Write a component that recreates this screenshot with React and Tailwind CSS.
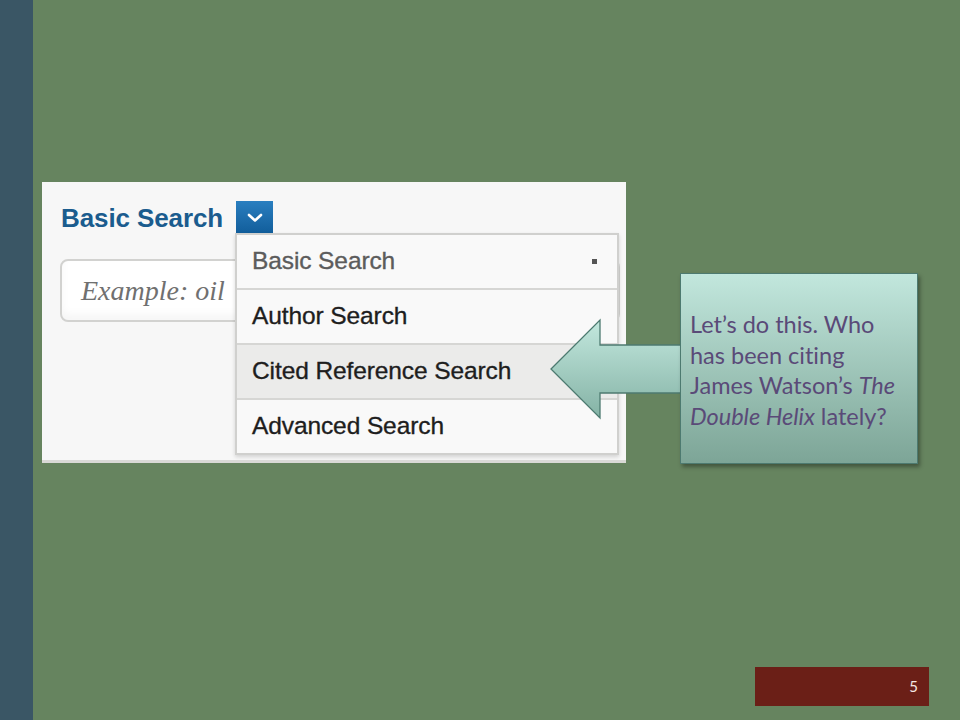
import React from 'react';

const menuItems = [
  { label: 'Basic Search', current: true },
  { label: 'Author Search' },
  { label: 'Cited Reference Search', hover: true },
  { label: 'Advanced Search' },
];

const SearchShot = () => (
  <div className="relative h-[281px] w-[584px] overflow-hidden bg-[#f7f7f7] border-b-[3px] border-[#d9d9d6] font-['Liberation_Sans',Arial,sans-serif]">
    <div className="flex items-center pl-[19px] pt-[16px]">
      <span className="text-[26px] font-bold leading-[40px] tracking-[-0.1px] text-[#1b5c8e]">
        Basic Search
      </span>
      <span className="ml-[13px] flex h-[35px] w-[37px] items-center justify-center bg-gradient-to-b from-[#2a7fc0] to-[#0f5b98]">
        <svg width="16" height="10" viewBox="0 0 16 10">
          <path d="M2 2l6 5.5L14 2" fill="none" stroke="#fff" strokeWidth="2.6" strokeLinecap="round" strokeLinejoin="round" />
        </svg>
      </span>
    </div>
    <div className="ml-[18px] mt-[21px] flex h-[63px] w-[560px] items-center rounded-[8px] border-[2px] border-[#d2d2d0] bg-white pl-[19px] shadow-[inset_0_-6px_8px_rgba(0,0,0,0.04)]">
      <span className="font-['Liberation_Serif',serif] text-[28px] italic text-[#707070]">Example: oil</span>
    </div>

    {/* dropdown menu */}
    <div className="absolute left-[193px] top-[51px] w-[384px] border-[2px] border-[#d0d0ce] bg-[#f9f9f9] shadow-[0_2px_4px_rgba(0,0,0,0.15)]">
      {menuItems.map((item, i) => (
        <div
          key={item.label}
          className={`flex items-center justify-between px-[15px] text-[24.5px] tracking-[-0.1px] [-webkit-text-stroke:0.35px_currentColor] ${
            i > 0 ? 'h-[55px] border-t-[2px] border-[#d6d6d4]' : 'h-[53px]'
          } ${item.hover ? 'bg-[#ebebea]' : ''} ${item.current ? 'text-[#5c5c5c]' : 'text-[#1e1e1e]'}`}
        >
          <span>{item.label}</span>
          {item.current && <span className="mr-[5px] h-[5px] w-[5px] bg-[#555]" />}
        </div>
      ))}
    </div>
  </div>
);

const Arrow = () => (
  <svg
    className="absolute left-[516px] top-[318px]"
    width="170"
    height="102"
    viewBox="0 0 170 102"
  >
    <defs>
      <linearGradient id="arrowFill" x1="0" y1="0" x2="0" y2="1">
        <stop offset="0" stopColor="#c3e8de" />
        <stop offset="1" stopColor="#84b2a5" />
      </linearGradient>
    </defs>
    <path
      d="M2 51 L51 2 L51 27 L166 27 L166 75 L51 75 L51 100 Z"
      fill="url(#arrowFill)"
      stroke="#4d7a70"
      strokeWidth="1.3"
    />
  </svg>
);

export default function App() {
  return (
    <div className="flex h-[720px] w-[960px] overflow-hidden">
      <div className="w-[33px] shrink-0 bg-[#3a5665]" />
      <div className="relative flex flex-1 flex-col bg-[#66845f]">
        <div className="ml-[9px] mt-[182px]">
          <SearchShot />
        </div>

        <Arrow />

        <div className="absolute left-[647px] top-[273px] h-[191px] w-[238px] border border-[#4d7a70] bg-gradient-to-b from-[#c2e7dd] to-[#7da597] pl-[9px] pt-[35px] shadow-[2px_3px_4px_rgba(0,0,0,0.35)]">
          <p className="whitespace-nowrap font-['Lato','Open_Sans',sans-serif] text-[23.5px] leading-[30.5px] text-[#5a4a78] [font-variant-ligatures:none]">
            Let’s do this. Who
            <br />
            has been citing
            <br />
            James Watson’s <i>The</i>
            <br />
            <i>Double Helix</i> lately?
          </p>
        </div>

        <div className="mt-auto mb-[14px] ml-[722px] flex h-[39px] w-[174px] items-center justify-end bg-[#6b1f17] pr-[11px]">
          <span className="font-['Lato',sans-serif] text-[15px] text-[#f4e8e2]">5</span>
        </div>
      </div>
    </div>
  );
}
